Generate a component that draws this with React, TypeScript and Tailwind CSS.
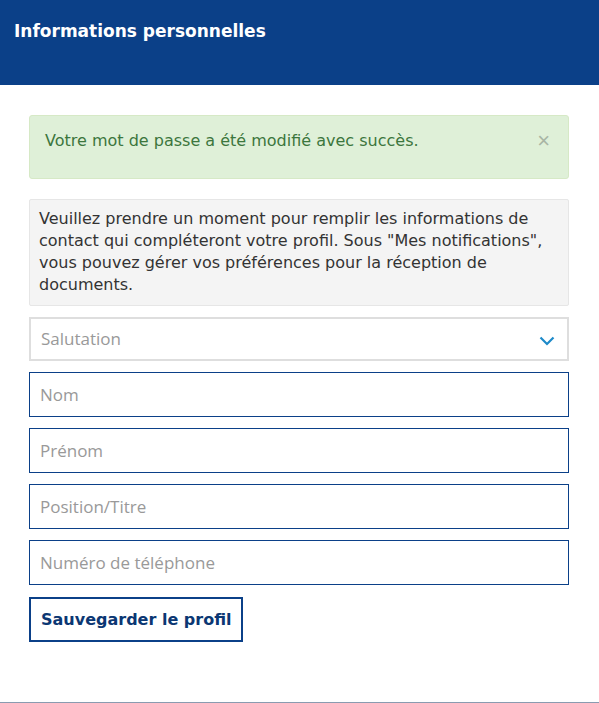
import React from 'react';

const fields = ['Nom', 'Prénom', 'Position/Titre', 'Numéro de téléphone'];

export default function App() {
  return (
    <div className="min-h-[703px] w-full bg-white font-['DejaVu_Sans',Verdana,sans-serif] flex flex-col">
      <div className="h-[85px] bg-[#0b4088] px-[14px] pt-[20px]">
        <h1 className="text-[17px] font-bold text-white leading-[22px]">Informations personnelles</h1>
      </div>

      <div className="flex-1 pl-[29px] pr-[30px] pt-[30px] pb-[60px] border-b border-[#8a9bb0]">
        <div className="flex items-start justify-between bg-[#dff0d8] border border-[#d6e9c6] rounded-[3px] text-[#3c763d] pl-[15px] pr-[18px] pt-[15px] h-[64px]">
          <span className="text-[16px] leading-5">Votre mot de passe a été modifié avec succès.</span>
          <span className="text-[22px] leading-5 text-[#a9b5a4] font-['Liberation_Sans',Arial,sans-serif]">×</span>
        </div>

        <div className="mt-[20px] bg-[#f4f4f4] border border-[#e6e6e6] rounded-[2px] px-[9px] pt-[8px] pb-[9px] text-[16px] leading-[22px] text-[#333]">
          Veuillez prendre un moment pour remplir les informations de contact qui compléteront votre profil. Sous "Mes notifications", vous pouvez gérer vos préférences pour la réception de documents.
        </div>

        <div className="mt-[11px] h-[44px] border-2 border-[#dedede] flex items-center justify-between pl-[10px] pr-[12px]">
          <span className="text-[17px] text-[#999] font-['Open_Sans',sans-serif]">Salutation</span>
          <svg width="16" height="10" viewBox="0 0 16 10" fill="none" className="mt-[4px]">
            <path d="M1.5 1.5 8 8l6.5-6.5" stroke="#1e8ac9" strokeWidth="2.2" />
          </svg>
        </div>

        <div className="mt-[11px] flex flex-col gap-[11px]">
          {fields.map((f) => (
            <input
              key={f}
              placeholder={f}
              className="h-[45px] w-full border border-[#0b4088] px-[10px] text-[17px] font-['Open_Sans',sans-serif] placeholder:text-[#999] outline-none"
            />
          ))}
        </div>

        <button className="mt-[12px] h-[45px] px-[10px] border-2 border-[#0b4088] text-[#0b3773] text-[16px] font-bold">
          Sauvegarder le profil
        </button>
      </div>
    </div>
  );
}
